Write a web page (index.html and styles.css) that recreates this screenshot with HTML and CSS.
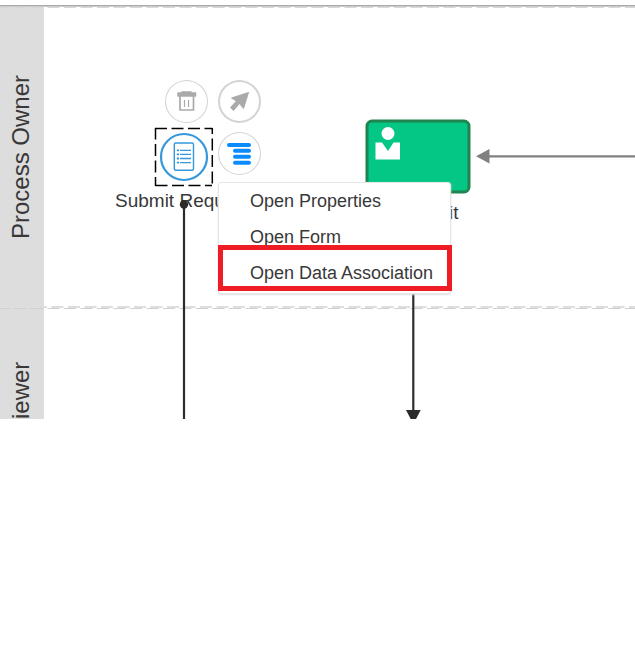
FILE: index.html
```html
<!DOCTYPE html>
<html lang="en">
<head>
<meta charset="utf-8">
<meta name="viewport" content="width=device-width, initial-scale=1">
<title>Process diagram</title>
<link rel="stylesheet" href="styles.css">
</head>
<body>
<main class="canvas">
  <section class="lane lane-owner"><h2 class="lane-title">Process Owner</h2></section>
  <section class="lane lane-viewer"><h2 class="lane-title">iewer</h2></section>

  <svg class="overlay" aria-hidden="true">
    <!-- lane boundaries -->
    <path d="M0 5.5H4000" stroke="#aaa"/>
    <path d="M0 6.5H4000" stroke="#ccc"/>
    <g fill="none" stroke-dasharray="12 4.5">
      <path d="M-2 7.5H4000" stroke="#d8d8d8"/>
      <path d="M2 307H4000" stroke="#dedede" stroke-width="2"/>
      <path d="M-2 308.5H4000" stroke="#d0d0d0"/>
    </g>
    <!-- task with a user marker -->
    <rect x="367" y="121" width="102" height="71" rx="5" fill="#05c785" stroke="#1f844f" stroke-width="3"/>
    <circle cx="388" cy="133.500" r="6.500" fill="#fff"/>
    <path d="M375.500 142.500H382L388 151L393.500 142.500H400V159.500H375.500Z" fill="#fff"/>
    <!-- incoming flow -->
    <path d="M488 156.300H4000" stroke="#808080" stroke-width="2.300"/>
    <path d="M476 156.300L489.500 149V163.500Z" fill="#808080"/>
  </svg>

  <span class="label label-submit">Submit Requ</span>
  <span class="label label-task">it</span>

  <svg class="overlay" aria-hidden="true">
    <circle cx="184" cy="204.500" r="4.200" fill="#2b2b2b"/>
    <path d="M184 204V420" stroke="#2b2b2b" stroke-width="2.200"/>
    <path d="M413.300 290V412" stroke="#2b2b2b" stroke-width="2.200"/>
    <path d="M406 410H420.700L415.500 420H411.200Z" fill="#2b2b2b"/>
    <!-- selected form node -->
    <g stroke="#000" stroke-width="1.500" fill="none">
      <path d="M155 128.500H212.500" stroke-dasharray="12 4.500"/>
      <path d="M212.300 128V186" stroke-dasharray="6 4.500 12 4.500 12 4.500 12 4.500"/>
      <path d="M212 185.500H155" stroke-dasharray="7 4.500 12 4.500 12 4.500 12 4.500"/>
      <path d="M155.500 186V128" stroke-dasharray="9 4.500 12 4.500 12 4.500 12"/>
    </g>
    <circle cx="184" cy="157" r="23" fill="#fff" stroke="#3498db" stroke-width="2.200"/>
    <g fill="none" stroke="#3498db">
      <rect x="174.300" y="143" width="19.200" height="27.300" rx="1.500" stroke-width="1.400"/>
      <path d="M180 150.300H191M180 154.300H191M180 158.500H191M180 162.700H191" stroke-width="1.300"/>
      <path d="M176.800 150.300H179M176.800 154.300H179M176.800 158.500H179M176.800 162.700H179" stroke-width="1.800"/>
    </g>
  </svg>

  <button class="tool tool-delete" aria-label="Delete">
    <svg viewBox="0 0 43 43"><path d="M13 14V13H17V12H26V13H30.500V16H13Z" fill="#aaa" stroke="#aaa" stroke-width="1.500" stroke-linejoin="round"/><path d="M15 16V30H28.500V16" fill="none" stroke="#aaa" stroke-width="1.700" stroke-linejoin="round"/><path d="M19.500 20V27M23.500 20V27" stroke="#aaa" stroke-width="1.200"/></svg>
  </button>
  <button class="tool tool-connect" aria-label="Connect">
    <svg viewBox="0 0 43 43"><path d="M30.500 12.500L13.500 18L18.500 21L12.500 27.500L15.500 30.500L21.500 23.500L25.500 28.500Z" fill="#aaa" stroke="#aaa" stroke-linejoin="round"/></svg>
  </button>
  <button class="tool tool-menu" aria-label="Options">
    <svg viewBox="0 0 43 43"><path d="M11 13H31M17 18.700H31M17 24.700H31M17 30.700H31" stroke="#0a8cff" stroke-width="4" stroke-linecap="round"/></svg>
  </button>

  <div class="menu" role="menu">
    <button class="menu-item" role="menuitem">Open Properties</button>
    <button class="menu-item" role="menuitem">Open Form</button>
    <button class="menu-item marked" role="menuitem">Open Data Association</button>
  </div>
</main>
</body>
</html>
```
FILE: styles.css
```css
* { box-sizing: border-box; }

body {
  margin: 0;
  background: #fff;
  color: #383838;
  font-family: "Liberation Sans", Arial, sans-serif;
}

.canvas {
  position: relative;
  overflow: hidden;
  padding-top: 6px;
}

.lane { display: flex; }
.lane-owner { height: 301px; }
.lane-viewer { height: 112px; }

.lane-title {
  width: 44px;
  margin: 0;
  padding-left: 2px;
  background: #ddd;
  font-size: 24px;
  font-weight: 400;
  line-height: 42px;
  text-align: center;
  white-space: nowrap;
  writing-mode: vertical-rl;
  transform: rotate(180deg);
}
.lane-viewer .lane-title { text-align: left; }

.overlay {
  position: absolute;
  top: 0;
  left: 0;
  width: 100%;
  height: 100%;
  pointer-events: none;
}

.label {
  position: absolute;
  font-size: 19px;
  line-height: 24px;
  white-space: nowrap;
}
.label-submit { left: 115px; top: 189px; }
.label-task { left: 449px; top: 201px; }

.tool {
  position: absolute;
  display: grid;
  place-content: center;
  width: 43px;
  height: 43px;
  padding: 0;
  border: 0;
  border-radius: 50%;
  background: #fff;
  box-shadow: inset 0 0 0 1px #d3d3d3;
}
.tool svg { width: 43px; height: 43px; }
.tool-delete { left: 165px; top: 80px; }
.tool-connect { left: 218px; top: 80px; box-shadow: inset 0 0 0 2px #d3d3d3; }
.tool-menu { left: 218px; top: 132px; }

.menu {
  position: absolute;
  left: 218px;
  top: 182px;
  display: flex;
  flex-direction: column;
  padding-bottom: 2px;
  border: 1px solid #e6e6e6;
  border-radius: 3px;
  background: #fff;
  box-shadow: 0 1px 2px #ddd;
}

.menu-item {
  position: relative;
  height: 36px;
  padding: 0 17px 0 31px;
  border: 0;
  background: none;
  color: #383838;
  font: 18px/36px "Liberation Sans", Arial, sans-serif;
  text-align: left;
}

.marked::after {
  content: "";
  position: absolute;
  inset: -10px -2px 0 -1px;
  border: 5px solid #ee1c25;
}
```
